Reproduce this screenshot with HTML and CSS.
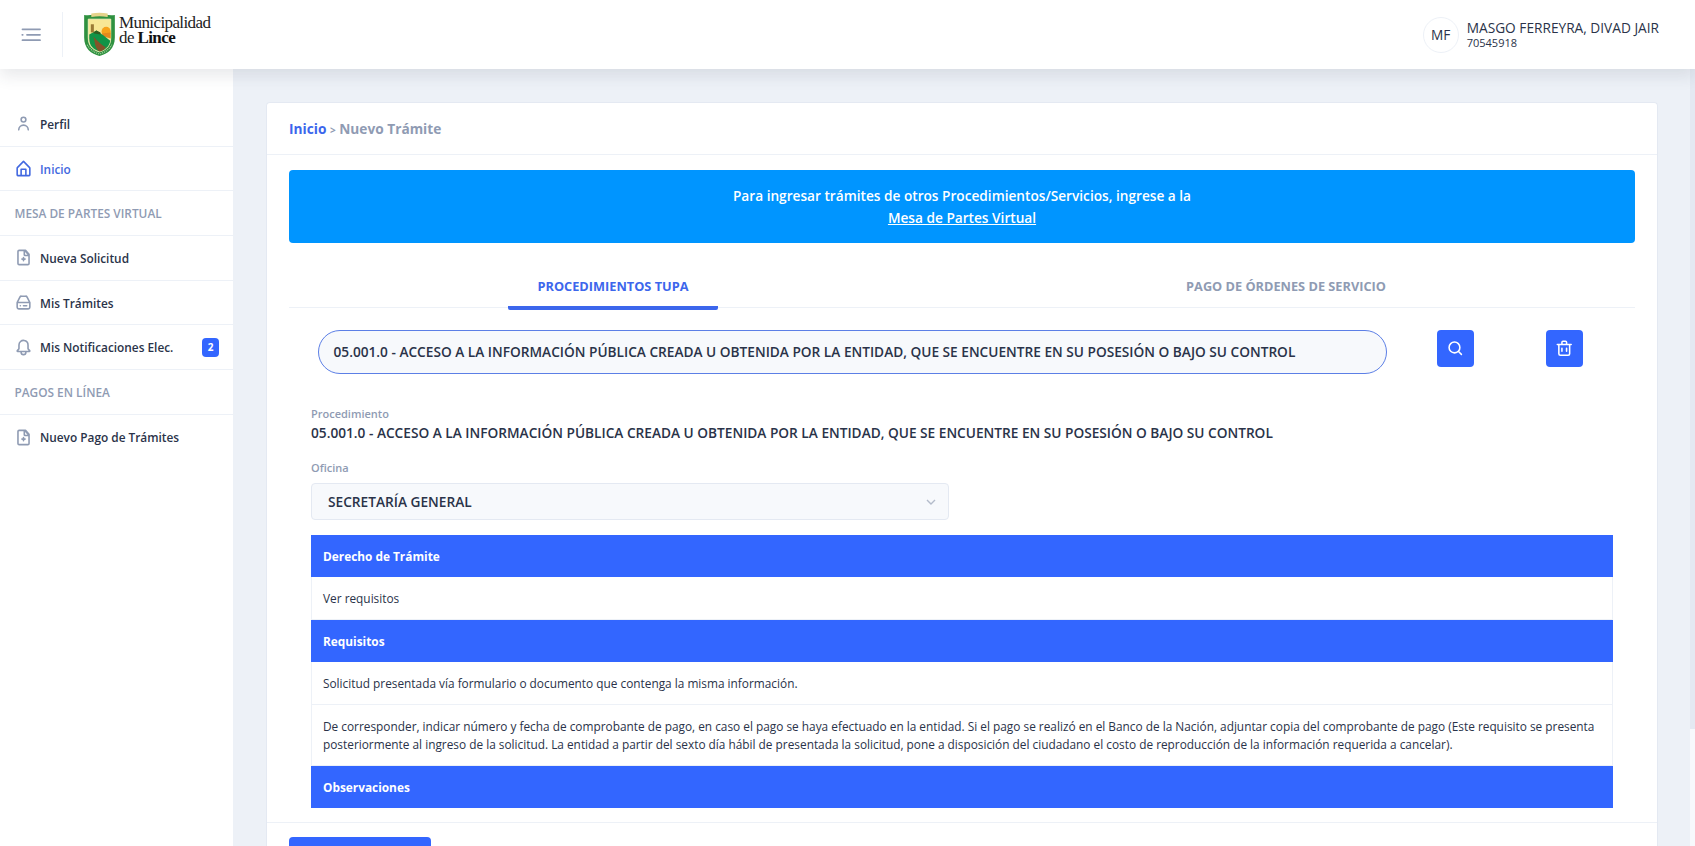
FILE: index.html
```html
<!DOCTYPE html>
<html lang="es">
<head>
<meta charset="utf-8">
<title>Municipalidad de Lince - Nuevo Trámite</title>
<link rel="stylesheet" href="styles.css">
</head>
<body>
<svg class="defs" width="0" height="0" aria-hidden="true">
  <symbol id="file" viewBox="0 0 24 24"><path d="M19.74 7.33l-4.44-5a1 1 0 0 0-.74-.33h-8A2.53 2.53 0 0 0 4 4.5v15A2.53 2.53 0 0 0 6.56 22h10.88A2.53 2.53 0 0 0 20 19.500V8a1 1 0 0 0-.26-.67zM14 5l3 3.500h-2.500A.5.500 0 0 1 14 8zm3.440 15H6.560a.53.53 0 0 1-.56-.5v-15a.53.53 0 0 1 .56-.5H12v4.500a2 2 0 0 0 2 2h4v9a.53.53 0 0 1-.56.500z"/><path d="M14 13h-1v-1a1 1 0 0 0-2 0v1h-1a1 1 0 0 0 0 2h1v1a1 1 0 0 0 2 0v-1h1a1 1 0 0 0 0-2z"/></symbol>
</svg>
<header class="header">
  <svg class="toggle" viewBox="0 0 20 14"><path d="M1.500 1.300h17.500M6 6.800h13M1.500 12.200h17.500M1.300 6.800h.4"/></svg>
  <div class="brand">
    <svg class="shield" viewBox="0 0 32 44">
      <path d="M1 3q7 1 15-2 8 3 15 2v22c0 11-7 16-15 18C8 41 1 36 1 25z" fill="#2f9140"/>
      <path d="M8 1.500q8-1.500 16 0v3.500q-8-1.500-16 0z" fill="#e5d38b"/>
      <path d="M5 7h22v18c0 8-4 12-11 14C9 37 5 33 5 25z" fill="#f8e795" stroke="#fff7c8" stroke-width=".8"/>
      <circle cx="22.500" cy="19" r="4.500" fill="#f6a21b"/>
      <path d="M18 21l9-1v6l-7-2z" fill="#e58a1e"/>
      <path d="M6 22l7-4 7 5 6.500 5c-1 6-5 9-10.500 10.500C9.500 36.500 6 33 6 26z" fill="#119447"/>
      <path d="M10 24c2 6 1 10 5 14l2 .5c3-1 4-2 5-4-4-2-8-6-12-10.500z" fill="#835329"/>
      <path d="M7.500 12h3v8h-3z" fill="#9b7a35"/>
      <path d="M10 20l3-2 4 2v2l-6-1z" fill="#315d22"/>
      <path d="M4 32q4 7 12 9 8-2 12-9" fill="none" stroke="#a9d2a0" stroke-width="1.200" stroke-dasharray="1 1"/>
    </svg>
    <div class="brand-name"><div>Municipalidad</div><div>de <b>Lince</b></div></div>
  </div>
  <div class="user">
    <div class="avatar">MF</div>
    <div><div class="user-name">MASGO FERREYRA, DIVAD JAIR</div><div class="user-id">70545918</div></div>
  </div>
</header>
<div class="shell">
  <nav class="sidebar">
    <a class="item"><svg viewBox="0 0 24 24"><path d="M12 11a4 4 0 1 0-4-4 4 4 0 0 0 4 4zm0-6a2 2 0 1 1-2 2 2 2 0 0 1 2-2zM12 13a7 7 0 0 0-7 7 1 1 0 0 0 2 0 5 5 0 0 1 10 0 1 1 0 0 0 2 0 7 7 0 0 0-7-7z"/></svg><span>Perfil</span></a>
    <a class="item active"><svg viewBox="0 0 24 24"><path d="M20.420 10.180L12.710 2.300a1 1 0 0 0-1.420 0l-7.710 7.890A2 2 0 0 0 3 11.620V20a2 2 0 0 0 1.890 2h14.220A2 2 0 0 0 21 20v-8.380a2.070 2.070 0 0 0-.58-1.440zM10 20v-6h4v6zm9 0h-3v-7a1 1 0 0 0-1-1H9a1 1 0 0 0-1 1v7H5v-8.420l7-7.150 7 7.190z"/></svg><span>Inicio</span></a>
    <div class="item group">MESA DE PARTES VIRTUAL</div>
    <a class="item"><svg><use href="#file"/></svg><span>Nueva Solicitud</span></a>
    <a class="item"><svg viewBox="0 0 24 24"><path d="M20.790 11.340l-3.340-6.680A3 3 0 0 0 14.760 3H9.240a3 3 0 0 0-2.690 1.660l-3.340 6.680a2 2 0 0 0-.21.900V18a3 3 0 0 0 3 3h12a3 3 0 0 0 3-3v-5.760a2 2 0 0 0-.21-.9zM8.340 5.550a1 1 0 0 1 .9-.55h5.520a1 1 0 0 1 .9.550L18.380 11H5.620zM18 19H6a1 1 0 0 1-1-1v-5h14v5a1 1 0 0 1-1 1z"/><path d="M16 15h-4a1 1 0 0 0 0 2h4a1 1 0 0 0 0-2z"/><circle cx="8" cy="16" r="1"/></svg><span>Mis Trámites</span></a>
    <a class="item"><svg viewBox="0 0 24 24"><path d="M20.520 15.210l-1.800-1.810V8.940a6.860 6.860 0 0 0-5.820-6.880 6.740 6.740 0 0 0-7.620 6.670v4.670l-1.800 1.810A1.640 1.640 0 0 0 4.640 18H8v.340A3.840 3.840 0 0 0 12 22a3.840 3.840 0 0 0 4-3.660V18h3.360a1.640 1.640 0 0 0 1.160-2.790zM14 18.340A1.880 1.880 0 0 1 12 20a1.880 1.880 0 0 1-2-1.660V18h4zM5.510 16l1.180-1.180a2 2 0 0 0 .59-1.420V8.730A4.730 4.730 0 0 1 8.900 5.170 4.670 4.670 0 0 1 12.640 4a4.860 4.860 0 0 1 4.080 4.900v4.500a2 2 0 0 0 .58 1.420L18.490 16z"/></svg><span>Mis Notificaciones Elec.</span><span class="badge">2</span></a>
    <div class="item group">PAGOS EN LÍNEA</div>
    <a class="item"><svg><use href="#file"/></svg><span>Nuevo Pago de Trámites</span></a>
  </nav>
  <main class="content">
    <section class="card">
      <div class="card-head"><a>Inicio</a> <small>&gt;</small> Nuevo Trámite</div>
      <div class="card-body">
        <div class="alert">Para ingresar trámites de otros Procedimientos/Servicios, ingrese a la<br><u>Mesa de Partes Virtual</u></div>
        <div class="tabs">
          <div class="tab"><span class="tab-label on">PROCEDIMIENTOS TUPA</span></div>
          <div class="tab"><span class="tab-label">PAGO DE ÓRDENES DE SERVICIO</span></div>
        </div>
        <div class="search">
          <div class="search-input">05.001.0 - ACCESO A LA INFORMACIÓN PÚBLICA CREADA U OBTENIDA POR LA ENTIDAD, QUE SE ENCUENTRE EN SU POSESIÓN O BAJO SU CONTROL</div>
          <button class="icon-btn"><svg viewBox="0 0 24 24"><path d="M20.710 19.290l-3.400-3.390A7.920 7.920 0 0 0 19 11a8 8 0 1 0-8 8 7.920 7.920 0 0 0 4.900-1.690l3.390 3.400a1 1 0 0 0 1.420 0 1 1 0 0 0 0-1.420zM5 11a6 6 0 1 1 6 6 6 6 0 0 1-6-6z"/></svg></button>
          <button class="icon-btn"><svg viewBox="0 0 24 24"><path d="M21 6h-5V4.330A2.420 2.420 0 0 0 13.500 2h-3A2.420 2.420 0 0 0 8 4.330V6H3a1 1 0 0 0 0 2h1v11a3 3 0 0 0 3 3h10a3 3 0 0 0 3-3V8h1a1 1 0 0 0 0-2zM10 4.330c0-.16.210-.33.500-.33h3c.29 0 .5.170.5.330V6h-4zM18 19a1 1 0 0 1-1 1H7a1 1 0 0 1-1-1V8h12z"/><path d="M9 17a1 1 0 0 0 1-1v-4a1 1 0 0 0-2 0v4a1 1 0 0 0 1 1zM15 17a1 1 0 0 0 1-1v-4a1 1 0 0 0-2 0v4a1 1 0 0 0 1 1z"/></svg></button>
        </div>
        <div class="detail">
          <div class="label">Procedimiento</div>
          <div class="value">05.001.0 - ACCESO A LA INFORMACIÓN PÚBLICA CREADA U OBTENIDA POR LA ENTIDAD, QUE SE ENCUENTRE EN SU POSESIÓN O BAJO SU CONTROL</div>
          <div class="label office">Oficina</div>
          <div class="select"><span>SECRETARÍA GENERAL</span><svg viewBox="0 0 10 6"><path d="M1 1l4 4 4-4"/></svg></div>
          <div class="table">
            <div class="row th">Derecho de Trámite</div>
            <div class="row">Ver requisitos</div>
            <div class="row th">Requisitos</div>
            <div class="row">Solicitud presentada vía formulario o documento que contenga la misma información.</div>
            <div class="row tall">De corresponder, indicar número y fecha de comprobante de pago, en caso el pago se haya efectuado en la entidad. Si el pago se realizó en el Banco de la Nación, adjuntar copia del comprobante de pago (Este requisito se presenta<br>posteriormente al ingreso de la solicitud. La entidad a partir del sexto día hábil de presentada la solicitud, pone a disposición del ciudadano el costo de reproducción de la información requerida a cancelar).</div>
            <div class="row th">Observaciones</div>
          </div>
        </div>
      </div>
      <div class="card-foot"><button class="primary" aria-label="Continuar"></button></div>
    </section>
  </main>
  <div class="scroll"><div class="thumb"></div></div>
</div>
</body>
</html>
```
FILE: styles.css
```css
* { box-sizing: border-box; }
body { margin: 0; height: 846px; overflow: hidden; font-family: "Open Sans", "Noto Sans", sans-serif; color: #2a3349; background: #edf1f7; }
button { border: 0; padding: 0; }
.defs { position: absolute; }
.header { position: relative; z-index: 2; display: flex; align-items: center; height: 69px; padding: 0 36px 0 21px; background: #fff; box-shadow: 0 7px 15px rgba(44, 51, 73, .11); }
.toggle { width: 20px; height: 14px; fill: none; stroke: #8f9bb3; stroke-width: 1.8; stroke-linecap: round; }
.brand { display: flex; height: 45px; margin-left: 21px; padding-left: 20px; border-left: 1px solid #edf1f7; }
.shield { width: 33px; height: 45px; }
.brand-name { margin: 3px 0 0 3px; font: 17px/15px "Liberation Serif", serif; letter-spacing: -.6px; color: #222; white-space: nowrap; }
.brand-name b { color: #111; }
.user { display: flex; align-items: center; margin-left: auto; white-space: nowrap; }
.avatar { display: flex; align-items: center; justify-content: center; width: 36px; height: 36px; margin-right: 8px; border: 1px solid #edf1f7; border-radius: 50%; font-size: 13.7px; }
.user-name { font-size: 13.7px; line-height: 17px; }
.user-id { font-size: 11px; line-height: 14px; }
.shell { display: flex; height: 777px; }
.sidebar { width: 233px; padding-top: 33px; background: #fff; flex: none; }
.item { display: flex; align-items: center; height: 44.700px; padding: 0 14px; border-bottom: 1px solid #edf1f7; font-size: 11.850px; font-weight: 600; white-space: nowrap; }
.item:last-child { border-bottom: 0; }
.item svg { width: 19px; height: 19px; margin-right: 7px; fill: #8f9bb3; }
.item.active, .item.active svg { color: #4268e0; fill: #4268e0; }
.item.group { padding-left: 14.500px; color: #8f9bb3; font-size: 11.850px; }
.badge { width: 17px; height: 19px; margin-left: auto; border-radius: 4px; background: #36f; color: #fff; font-size: 10px; font-weight: 700; line-height: 19px; text-align: center; }
.content { flex: 1; min-width: 0; padding: 33px 32px 0 33px; }
.card { height: 744px; border: 1px solid #e4e9f2; border-bottom: 0; border-radius: 4px 4px 0 0; background: #fff; overflow: hidden; }
.card-head { height: 51.500px; padding: 15px 22px 0; border-bottom: 1px solid #edf1f7; color: #8f9bb3; font-size: 13.700px; font-weight: 700; line-height: 22px; }
.card-head a { color: #3c66ec; }
.card-head small { font-size: 10px; }
.card-body { height: 667.500px; padding: 15px 22px 0; }
.alert { height: 73px; padding-top: 15px; border-radius: 4px; background: #0095ff; color: #fff; font-size: 13.670px; font-weight: 600; line-height: 22px; text-align: center; }
.tabs { display: flex; height: 65.500px; border-bottom: 1px solid #edf1f7; }
.tab { flex: 1; text-align: center; padding-top: 14.500px; }
.tab:first-child { flex: 0 0 648px; }
.tab-label { display: inline-block; width: 210px; height: 53px; padding-top: 18px; color: #8f9bb3; font-size: 12.750px; font-weight: 700; line-height: 22px; white-space: nowrap; }
.on { color: #3c66ec; background: linear-gradient(#3c66ec, #3c66ec) bottom / 100% 4px no-repeat; border-radius: 2px; }
.search { display: flex; align-items: flex-start; padding: 22px 0 0 29px; }
.search-input { flex: none; width: 1069px; height: 44px; margin-right: 50px; padding-left: 14.500px; border: 1px solid #5c7fe6; border-radius: 22px; background: #f7f9fc; font-size: 13.680px; font-weight: 600; line-height: 42px; white-space: nowrap; }
.icon-btn { flex: none; display: flex; align-items: center; justify-content: center; width: 37px; height: 37px; margin-right: 72px; border-radius: 4px; background: #36f; }
.icon-btn svg { width: 18.500px; height: 18.500px; fill: #fff; }
.detail { padding: 31px 22px 0; }
.label { color: #8f9bb3; font-size: 11px; font-weight: 600; line-height: 18px; }
.value { font-size: 13.680px; font-weight: 600; line-height: 20px; white-space: nowrap; }
.office { margin-top: 16px; }
.select { display: flex; align-items: center; justify-content: space-between; width: 638px; height: 37px; margin-top: 6px; padding: 0 12px 0 16px; border: 1px solid #e4e9f2; border-radius: 4px; background: #f7f9fc; font-size: 13.700px; font-weight: 600; }
.select svg { width: 10px; height: 6px; fill: none; stroke: #b3bbca; stroke-width: 1.400; }
.table { margin-top: 15px; border: 1px solid #edf1f7; border-width: 0 1px; }
.row { height: 42.400px; padding: 0 11px; border-bottom: 1px solid #edf1f7; font-size: 11.850px; line-height: 42.500px; white-space: nowrap; }
.row.th { margin: 0 -1px; padding: 0 12px; border: 0; background: #36f; color: #fff; font-weight: 700; }
.row.tall { height: 61.500px; padding-top: 12.500px; line-height: 18.200px; }
.card-foot { padding: 14px 22px; border-top: 1px solid #edf1f7; }
.primary { display: block; width: 142px; height: 36px; border-radius: 4px; background: #36f; }
.scroll { width: 5px; background: #f7f9fc; }
.thumb { height: 660px; background: #e4e9f2; }
```
